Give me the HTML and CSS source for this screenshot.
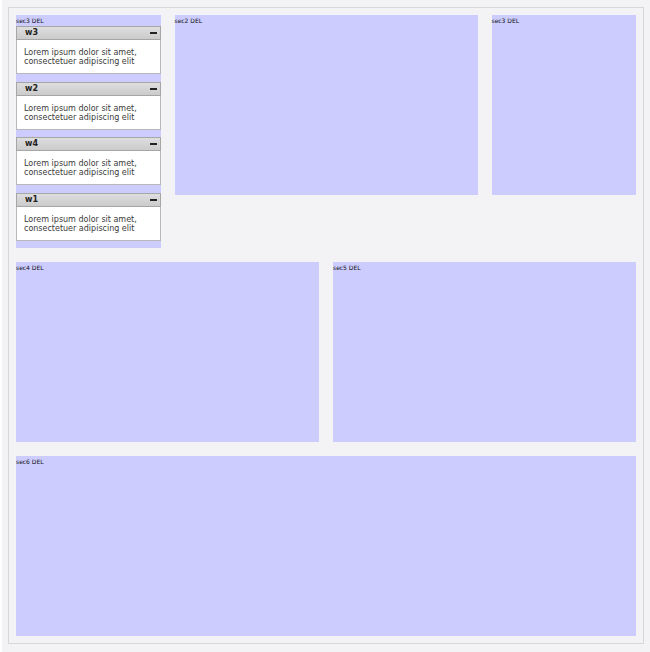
FILE: index.html
```
<!DOCTYPE html>
<html lang="en">
<head>
<meta charset="utf-8">
<title>Sections</title>
<link rel="stylesheet" href="styles.css">
</head>
<body>
<main class="board">
  <section class="section section-tall">
    <header class="label">sec3 <a href="#">DEL</a></header>
    <div class="widgets">
      <article class="widget">
        <header class="bar"><h2>w3</h2><button class="toggle" aria-label="Collapse w3"></button></header>
        <p>Lorem ipsum dolor sit amet, consectetuer adipiscing elit</p>
      </article>
      <article class="widget">
        <header class="bar"><h2>w2</h2><button class="toggle" aria-label="Collapse w2"></button></header>
        <p>Lorem ipsum dolor sit amet, consectetuer adipiscing elit</p>
      </article>
      <article class="widget">
        <header class="bar"><h2>w4</h2><button class="toggle" aria-label="Collapse w4"></button></header>
        <p>Lorem ipsum dolor sit amet, consectetuer adipiscing elit</p>
      </article>
      <article class="widget">
        <header class="bar"><h2>w1</h2><button class="toggle" aria-label="Collapse w1"></button></header>
        <p>Lorem ipsum dolor sit amet, consectetuer adipiscing elit</p>
      </article>
    </div>
  </section>
  <section class="section span-2"><header class="label">sec2 <a href="#">DEL</a></header></section>
  <section class="section"><header class="label">sec3 <a href="#">DEL</a></header></section>
  <section class="section span-2"><header class="label">sec4 <a href="#">DEL</a></header></section>
  <section class="section span-2"><header class="label">sec5 <a href="#">DEL</a></header></section>
  <section class="section span-4"><header class="label">sec6 <a href="#">DEL</a></header></section>
</main>
</body>
</html>
```
FILE: styles.css
```
* {
  box-sizing: border-box;
}

html {
  background: #f3f3f5;
}

body {
  margin: 0;
  padding: 7px 6px 8px;
  border-left: 2px solid #fff;
  color: #3a3a3a;
  font: 8px/9px "DejaVu Sans", Verdana, sans-serif;
}

.board {
  display: grid;
  grid-template-columns: repeat(4, minmax(0, 1fr));
  gap: 14px;
  align-items: start;
  padding: 7px;
  border: 1px solid #d7d7d7;
}

.section {
  display: flex;
  flex-direction: column;
  min-height: 180px;
  background: #ccccfe;
}

.section-tall {
  min-height: 233px;
  padding-bottom: 7px;
}

.span-2 {
  grid-column: span 2;
}

.span-4 {
  grid-column: span 4;
}

.label {
  color: #111;
  font-size: 6px;
  line-height: 11px;
}

.label a {
  color: inherit;
  text-decoration: none;
}

.widgets {
  flex: 1;
  display: flex;
  flex-direction: column;
  justify-content: space-between;
}

.widget {
  border: 1px solid #b8b8bc;
  background: #fff;
}

.bar {
  display: flex;
  align-items: center;
  justify-content: space-between;
  height: 14px;
  margin: -1px -1px 0;
  padding: 0 3px 0 8px;
  border: 1px solid #a6a6a6;
  background: linear-gradient(#dedede, #cbcbcb);
}

.bar h2 {
  margin: 0;
  color: #222;
  font-size: 8px;
  line-height: 12px;
}

.toggle {
  width: 7px;
  height: 2px;
  padding: 0;
  border: 0;
  background: #222;
}

.widget p {
  margin: 0;
  padding: 8px 7px 7px;
}
```
